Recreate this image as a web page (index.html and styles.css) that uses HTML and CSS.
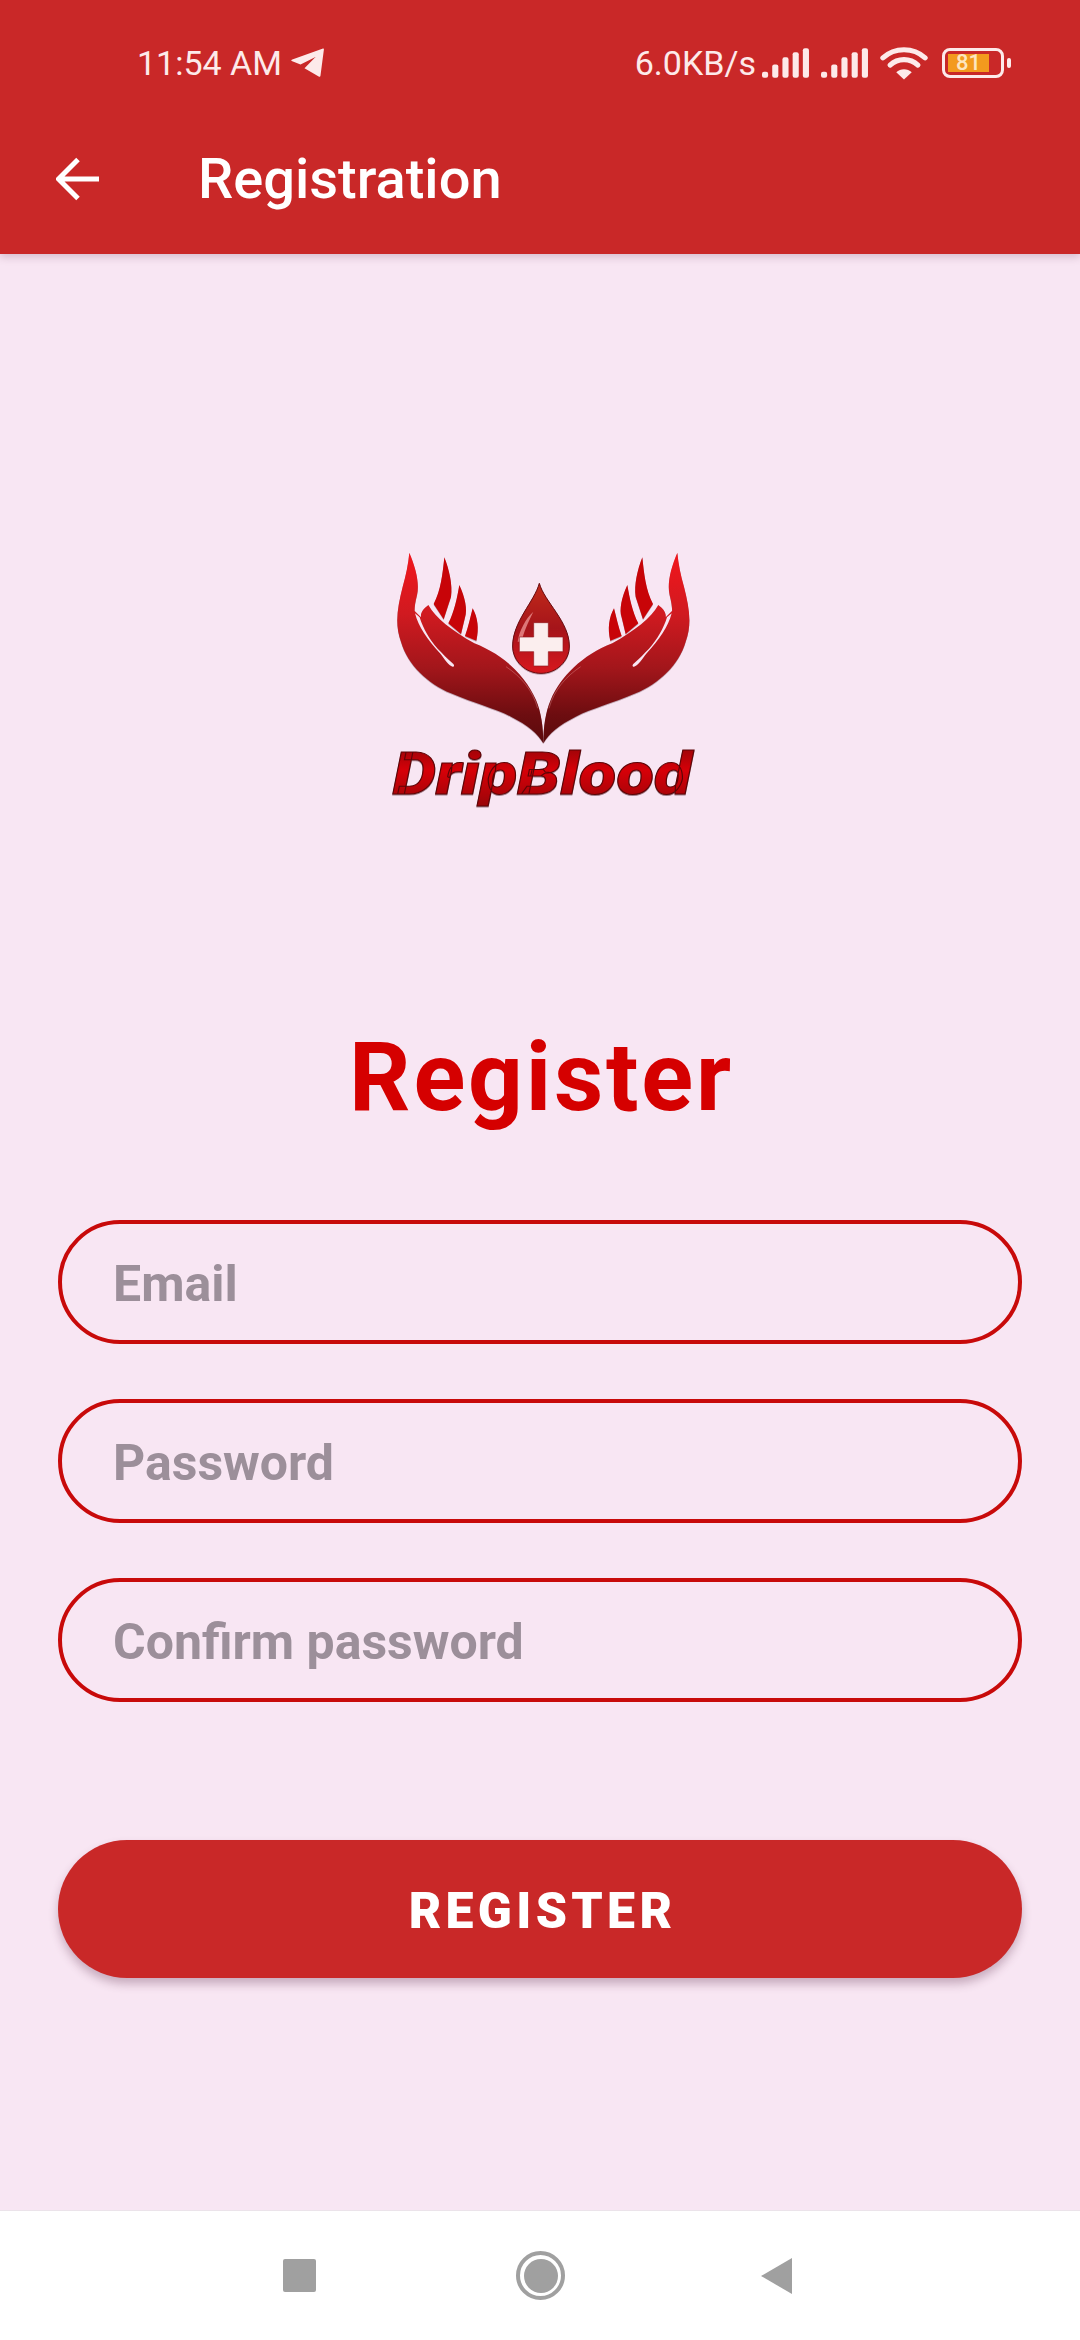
FILE: index.html
```html
<!DOCTYPE html>
<html lang="en">
<head>
<meta charset="utf-8">
<title>Registration</title>
<link rel="stylesheet" href="styles.css">
</head>
<body>
<div class="screen">
  <header class="appbar">
    <div class="status">
      <div class="status-left">
        <span class="status-text">11:54 AM</span>
        <svg class="tg" viewBox="0 0 34 32"><path d="M33 1.500C33.700 1.300 34 1.700 33.900 2.400L30.500 28.500C30.400 29.600 29.600 30 28.700 29.500L14.500 21.200L25.500 10L10.500 17.500L2.300 14.200C.8 13.600.8 13 2.300 12.400Z"/></svg>
      </div>
      <div class="status-right">
        <span class="status-text">6.0KB/s</span>
        <svg class="signal" viewBox="0 0 47 30"><rect x="0" y="23" width="6" height="6" rx="2"/><rect x="10" y="16" width="6" height="13" rx="2"/><rect x="20" y="9" width="6" height="20" rx="2"/><rect x="30" y="4" width="6" height="25" rx="2"/><rect x="40" y="0" width="6" height="29" rx="2"/></svg>
        <svg class="signal" viewBox="0 0 47 30"><rect x="0" y="23" width="6" height="6" rx="2"/><rect x="10" y="16" width="6" height="13" rx="2"/><rect x="20" y="9" width="6" height="20" rx="2"/><rect x="30" y="4" width="6" height="25" rx="2"/><rect x="40" y="0" width="6" height="29" rx="2"/></svg>
        <svg class="wifi" viewBox="0 0 46 33"><path class="arc" d="M2.500 11.500C14 1 32 1 43.500 11.500"/><path class="arc" d="M9.500 18.500C17 11.500 29 11.500 36.500 18.500"/><path class="dot" d="M23 32.500L15.500 25.500C19.500 21.500 26.500 21.500 30.500 25.500Z"/></svg>
        <div class="battery">
          <div class="battery-body"><span class="battery-level">81</span></div>
          <div class="battery-tip"></div>
        </div>
      </div>
    </div>
    <div class="toolbar">
      <svg class="back" viewBox="0 0 44 44"><path d="M43 22H3M22 2.500L2.500 22L22 41.500"/></svg>
      <h1 class="title">Registration</h1>
    </div>
  </header>

  <main class="content">
    <svg class="logo" viewBox="0 0 1020 870" role="img" aria-label="DripBlood logo">
      <defs>
        <linearGradient id="handGrad" gradientUnits="userSpaceOnUse" x1="0" y1="70" x2="0" y2="640">
          <stop offset="0" stop-color="#f2161c"/>
          <stop offset=".32" stop-color="#d01a20"/>
          <stop offset=".6" stop-color="#a3161b"/>
          <stop offset=".85" stop-color="#6d0d10"/>
          <stop offset="1" stop-color="#5a0a0c"/>
        </linearGradient>
        <linearGradient id="dropGrad" x1="0" y1="0" x2="0" y2="1">
          <stop offset="0" stop-color="#c22a1a"/>
          <stop offset=".5" stop-color="#a5141a"/>
          <stop offset="1" stop-color="#d8181e"/>
        </linearGradient>
        <linearGradient id="wordGrad" x1="0" y1="0" x2="0" y2="1">
          <stop offset="0" stop-color="#8a0508"/>
          <stop offset=".45" stop-color="#d60008"/>
          <stop offset="1" stop-color="#960508"/>
        </linearGradient>
        <g id="hand">
          <path class="finger" d="M220 82C235 120 245 165 240 200L218 268L188 222C210 180 215 130 220 82Z"/>
          <path class="finger" d="M265 165C282 200 290 240 282 262L270 312L232 280C250 245 258 205 265 165Z"/>
          <path class="finger" d="M305 235C320 262 325 295 316 332L282 318C292 290 298 262 305 235Z"/>
          <path class="palm" d="M115 68C135 115 146 160 138 195C128 235 128 255 140 285C125 258 128 240 128 240L150 262C148 245 160 235 172 225C195 265 240 300 310 340C400 375 465 440 495 510C510 545 517 590 517 640C500 610 470 585 420 560C370 535 310 520 240 490C170 460 110 405 90 335C70 280 80 230 95 170C105 135 112 100 115 68Z"/>
          <path class="slit" d="M132 250C142 290 170 330 207 370C220 386 233 408 245 410C252 410 250 403 243 398C228 385 216 372 200 356C176 330 156 295 146 262Z"/>
          <path class="vein" d="M405 410C450 440 485 480 500 535"/>
        </g>
      </defs>
      <g class="logo-art">
        <use href="#hand"/>
        <use href="#hand" transform="matrix(-1 0 0 1 1034 0)"/>
        <path class="drop" d="M505 160C520 215 595 275 595 348C595 395 555 430 510 430C465 430 425 395 425 348C425 275 490 215 505 160Z"/>
        <path class="drop-shine" d="M440 335C445 300 465 265 487 245C470 280 458 305 452 335Z"/>
        <path class="cross" d="M488 278H532V321H576V365H532V408H488V365H445V321H488Z"/>
      </g>
      <text class="word" x="65" y="792" textLength="897" lengthAdjust="spacingAndGlyphs">DripBlood</text>
    </svg>

    <h2 class="heading">Register</h2>

    <form class="form">
      <div class="field">Email</div>
      <div class="field">Password</div>
      <div class="field">Confirm password</div>
      <button class="submit" type="button">REGISTER</button>
    </form>
  </main>

  <nav class="navbar">
    <span class="nav-square"></span>
    <span class="nav-home"><span class="nav-home-dot"></span></span>
    <svg class="nav-back" viewBox="0 0 33 40"><path d="M32 2V38L1 20Z"/></svg>
  </nav>
</div>
</body>
</html>
```

FILE: styles.css
```css
* { box-sizing: border-box; }
html, body { margin: 0; padding: 0; }
body { font-family: Roboto, "Liberation Sans", sans-serif; background: #f8e6f3; }

.screen { width: 1080px; height: 2340px; display: flex; flex-direction: column; overflow: hidden; }

.appbar { height: 254px; flex: none; background: #c92828; box-shadow: 0 3px 8px rgba(90, 40, 70, .22); position: relative; z-index: 1; display: flex; flex-direction: column; }

.status { height: 82px; padding: 44px 69px 0 137px; display: flex; justify-content: space-between; align-items: flex-start; color: #fdeaea; }
.status-left { display: flex; align-items: center; gap: 8px; height: 38px; }
.status-right { display: flex; align-items: center; gap: 6px; height: 38px; }
.status-text { font-size: 34px; line-height: 38px; }
.tg { width: 34px; height: 32px; fill: #fdeaea; }
.signal { width: 48px; height: 31px; fill: #fdeaea; }
.signal + .signal { margin-left: 5px; }
.wifi { width: 48px; height: 34px; margin: 0 8px 0 5px; }
.wifi .arc { fill: none; stroke: #fdeaea; stroke-width: 5; stroke-linecap: round; }
.wifi .dot { fill: #fdeaea; }

.battery { display: flex; align-items: center; gap: 3px; }
.battery-body { width: 62px; height: 30px; border: 3.500px solid #fdeaea; border-radius: 8px; padding: 3px 12px 3px 3px; display: flex; }
.battery-level { flex: 1; background: #f39a1e; font-size: 22px; line-height: 17px; text-align: center; color: #fde6c0; font-weight: 500; }
.battery-tip { width: 4px; height: 10px; border-radius: 2px; background: #fdeaea; }

.toolbar { flex: 1; display: flex; align-items: center; padding: 22px 0 0 56px; gap: 98px; }
.back { width: 44px; height: 44px; fill: none; stroke: #fff; stroke-width: 5; flex: none; }
.title { margin: 0; font-size: 56px; line-height: 64px; font-weight: 500; color: #fff; }

.content { flex: 1; display: flex; flex-direction: column; align-items: center; padding: 276px 58px 0; }

.logo { width: 340px; height: 290px; flex: none; margin-left: 2px; }
.logo-art { filter: drop-shadow(0 2px 1.500px rgba(70, 20, 30, .45)); }
.finger { fill: #c80408; }
.palm { fill: url(#handGrad); }
.slit { fill: #f8e6f3; }
.vein { fill: none; stroke: #f4b0b0; stroke-width: 2; opacity: .5; }
.drop { fill: url(#dropGrad); stroke: #6a0c10; stroke-width: 3; }
.drop-shine { fill: #f4a0a0; opacity: .7; }
.cross { fill: #fbeeee; stroke: #8f1a1e; stroke-width: 2; }
.word { font-family: Roboto, sans-serif; font-weight: 900; font-style: italic; font-size: 176px; fill: url(#wordGrad); stroke: #5c0406; stroke-width: 3; filter: drop-shadow(0 3px 2px rgba(70, 20, 30, .5)); }

.heading { margin: 201px 0 87px; padding-left: 3px; font-size: 96px; line-height: 112px; font-weight: 700; color: #d50000; letter-spacing: 2.800px; }

.form { width: 100%; display: flex; flex-direction: column; gap: 55px; }
.field { height: 124px; border: 4px solid #c80a0a; border-radius: 62px; padding: 3px 0 0 51px; display: flex; align-items: center; font-size: 50px; font-weight: 700; color: #9c8f9a; }
.submit { margin-top: 83px; height: 138px; border: 0; border-radius: 69px; padding: 4px 0 0 5px; background: #c92828; color: #fff; font-family: inherit; font-size: 50px; font-weight: 900; letter-spacing: 4.300px; box-shadow: 0 6px 10px rgba(90, 40, 70, .3); }

.navbar { height: 130px; flex: none; background: #fff; display: flex; align-items: center; justify-content: center; padding-right: 4px; border-top: 1px solid #ebe3ea; }
.nav-square { width: 33px; height: 33px; background: #a0a0a0; border-radius: 2px; margin-right: 200px; }
.nav-home { width: 49px; height: 49px; border: 4px solid #a0a0a0; border-radius: 50%; display: flex; align-items: center; justify-content: center; }
.nav-home-dot { width: 34px; height: 34px; background: #a0a0a0; border-radius: 50%; }
.nav-back { width: 33px; height: 40px; fill: #a0a0a0; margin-left: 195px; }
```
